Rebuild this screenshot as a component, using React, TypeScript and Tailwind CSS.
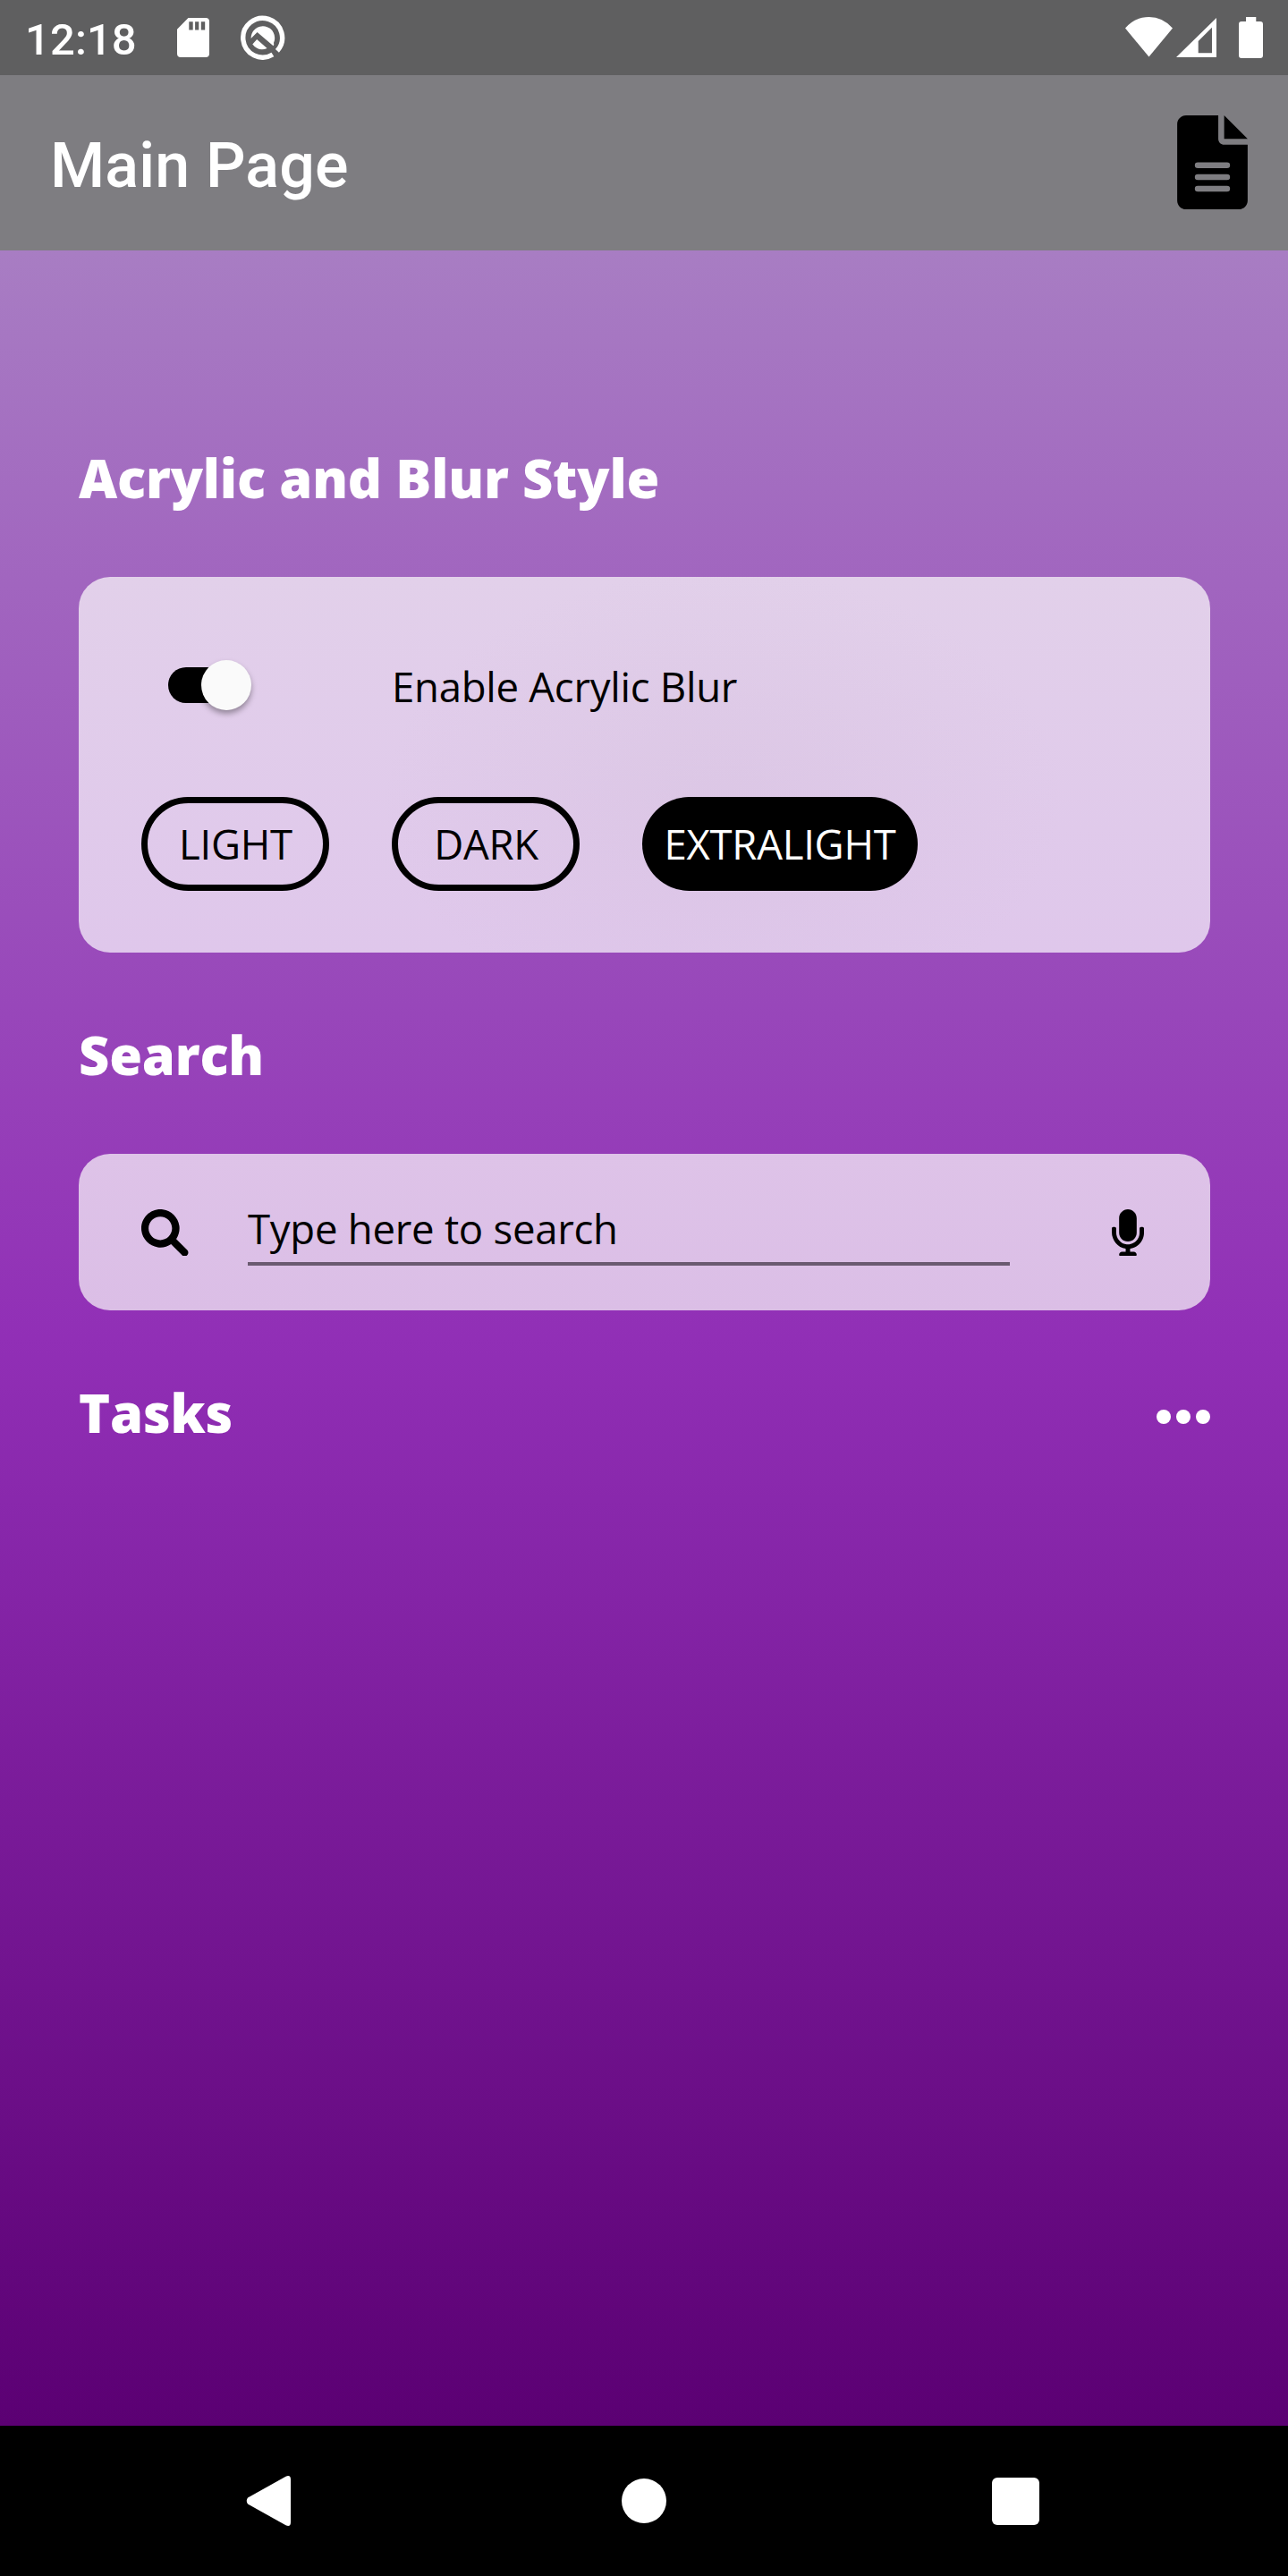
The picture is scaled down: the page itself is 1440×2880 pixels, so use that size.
import React from "react";

const SdCardIcon = () => (
  <svg className="h-[44px] w-[36px]" viewBox="0 0 36 44" fill="#fff" fillRule="evenodd">
    <path d="M12.5 0H32a4 4 0 0 1 4 4v36a4 4 0 0 1-4 4H4a4 4 0 0 1-4-4V12.7ZM13.3 4.3v9.2h4.4V4.3Zm6.8 0v9.2h4.2V4.3Zm6.7 0v9.2h4.4V4.3Z" />
  </svg>
);

const BadgeIcon = () => (
  <svg className="h-[50px] w-[50px]" viewBox="0 0 50 50" fill="none">
    <path d="M35.9 44A21.9 21.9 0 1 1 40.9 39.9" stroke="#fff" strokeWidth="5.4" />
    <path d="M11.6 26A13.3 13.3 0 1 1 37 31Q37.8 33.5 36.5 34.2L18.6 18.9Z" fill="#fff" />
    <path d="M18.2 27 29.6 36.9C24 39.8 17.5 38.3 13.3 32.5Z" fill="#fff" />
  </svg>
);

const StatusBar = () => (
  <div className="flex h-[84px] items-start bg-[#5f5f60] text-white">
    <span className="ml-[28px] mt-[15px] w-[125px] whitespace-nowrap font-['Roboto'] text-[49px] font-medium leading-[60px] tracking-[0.1px]">12:18</span>
    <div className="ml-[45px] mt-5">
      <SdCardIcon />
    </div>
    <div className="ml-[34.500px] mt-[17px]">
      <BadgeIcon />
    </div>
    <svg className="ml-auto mt-[19px] h-[45px] w-[53px]" viewBox="0 0 53 45" fill="#fff">
      <path d="M0 12.5Q11 0 26.5 0T53 12.5L26.5 44.5Z" />
    </svg>
    <svg className="ml-[4px] mt-[20px] h-[44px] w-[45px]" viewBox="0 0 45 44" fill="#fff" fillRule="evenodd">
      <path d="M45 0V44H0ZM40 10.8 24.7 26V39.2H40Z" />
    </svg>
    <svg className="ml-[25px] mr-[28px] mt-[19px] h-[46px] w-[27px]" viewBox="0 0 27 46" fill="#fff">
      <path d="M8 0H19.3V5H24a3 3 0 0 1 3 3V43a3 3 0 0 1-3 3H3a3 3 0 0 1-3-3V8a3 3 0 0 1 3-3H8Z" />
    </svg>
  </div>
);

const AppBar = () => (
  <header className="flex h-[196px] items-center justify-between bg-[#7e7d81] pl-[56px] pr-[45px]">
    <h1 className="pt-[6px] font-['Roboto'] text-[70px] font-medium leading-[80px] tracking-[0.15px] text-white">Main Page</h1>
    <svg className="mb-[2px] h-[105px] w-[79px]" viewBox="0 0 384 512" fillRule="evenodd">
      <path d="M256 0v128h128ZM224 128V0H48C21.5 0 0 21.5 0 48v416c0 26.5 21.5 48 48 48h288c26.500 0 48-21.500 48-48V160H256c-17.700 0-32-14.300-32-32Zm48 288H112a16 16 0 0 1 0-32h160a16 16 0 0 1 0 32Zm0-64H112a16 16 0 0 1 0-32h160a16 16 0 0 1 0 32Zm0-64H112a16 16 0 0 1 0-32h160a16 16 0 0 1 0 32Z" />
    </svg>
  </header>
);

const Heading = ({ children }: { children: React.ReactNode }) => (
  <h2 className="text-[59.500px] font-extrabold leading-[80px] tracking-[-0.17px] text-white">{children}</h2>
);

const Pill = ({ label, active = false }: { label: string; active?: boolean }) => (
  <button
    className={
      active
        ? "flex h-[105px] w-[308px] items-center justify-center rounded-full bg-black text-white"
        : "flex h-[105px] w-[210px] items-center justify-center rounded-full border-[7px] border-black pl-[1px]"
    }
  >
    {label}
  </button>
);

const StyleCard = () => (
  <section className="mt-[71px] h-[420px] rounded-[35px] bg-[radial-gradient(ellipse_380px_260px_at_720px_250px,rgba(200,180,205,0.18),transparent),linear-gradient(#e2d0ea,#dfc7eb)] px-[70px] pt-[82px]">
    <div className="flex h-[80px] items-center">
      <div className="mb-[2px] ml-[30px] flex h-[40px] w-[93px] items-center rounded-full bg-[linear-gradient(90deg,#000_70%,transparent_70%)]">
        <div className="ml-auto h-[56px] w-[56px] shrink-0 rounded-full bg-[#fafafa] shadow-[0_4px_6px_rgba(0,0,0,0.35)]" />
      </div>
      <span className="ml-[157px]">Enable Acrylic Blur</span>
    </div>
    <div className="mt-[84px] flex gap-[70px]">
      <Pill label="LIGHT" />
      <Pill label="DARK" />
      <Pill label="EXTRALIGHT" active />
    </div>
  </section>
);

const SearchCard = () => (
  <section className="mt-[71px] flex h-[175px] items-center rounded-[35px] bg-[linear-gradient(#dec3e8,#dbbee6)] pl-[70px] pr-[74px]">
    <svg className="mt-[1px] h-[52.500px] w-[52.500px]" viewBox="0 0 512 512">
      <path d="M500.3 443.7l-119.7-119.7c27.22-40.41 40.65-90.9 33.46-144.7C401.8 87.79 326.8 13.32 235.2 1.723C99.01-15.51-15.51 99.01 1.724 235.2c11.6 91.64 86.08 166.7 177.6 178.9c53.8 7.189 104.3-6.236 144.7-33.46l119.7 119.7c15.62 15.62 40.95 15.62 56.57 0C515.9 484.7 515.9 459.3 500.3 443.7zM79.1 208c0-70.58 57.42-128 128-128s128 57.42 128 128c0 70.58-57.42 128-128 128S79.1 278.6 79.1 208z" />
    </svg>
    <div className="ml-[66.500px] flex h-[74px] w-[852px] items-start border-b-4 border-[#6a5a70]">
      <span className="leading-[64px]">Type here to search</span>
    </div>
    <svg className="ml-auto mt-[1px] h-[52.500px] w-[36px]" viewBox="0 0 352 512">
      <path d="M176 352c53.02 0 96-42.98 96-96V96c0-53.02-42.98-96-96-96S80 42.98 80 96v160c0 53.02 42.98 96 96 96zm160-160h-16c-8.840 0-16 7.160-16 16v48c0 74.800-64.490 134.820-140.790 127.380C96.710 376.890 48 317.110 48 250.300V208c0-8.840-7.160-16-16-16H16c-8.840 0-16 7.160-16 16v40.160c0 89.640 63.970 169.550 152 181.690V464H112c-17.670 0-32 14.330-32 32 0 8.840 7.160 16 16 16h160c8.840 0 16-7.160 16-16 0-17.670-14.330-32-32-32h-40v-33.770C285.710 418.470 352 344.900 352 256v-48c0-8.840-7.160-16-16-16z" />
    </svg>
  </section>
);

const NavBar = () => (
  <nav className="flex h-[168px] items-center justify-between bg-black pl-[275px] pr-[278.500px]">
    <svg className="h-[56px] w-[50px]" viewBox="0 0 50 56" fill="#fff">
      <path d="M2 24.500 44.500.700Q50-1.500 50 4V52Q50 57.500 44.500 55.300L2 31.500Q-.500 28 2 24.500Z" />
    </svg>
    <div className="ml-[6px] h-[50px] w-[50px] rounded-full bg-white" />
    <div className="h-[53px] w-[53px] rounded-[6px] bg-white" />
  </nav>
);

export default function App() {
  return (
    <div className="flex h-[2880px] w-[1440px] flex-col overflow-hidden bg-black font-['Open_Sans',sans-serif] text-[45.500px] tracking-[-0.26px] text-black">
      <StatusBar />
      <AppBar />
      <main className="flex-1 bg-[linear-gradient(#a87dc3,#912fb6_50%,#5b0073)] pl-[88px] pr-[87px] pt-[214px]">
        <Heading>Acrylic and Blur Style</Heading>
        <StyleCard />
        <div className="mt-[74px]">
          <Heading>Search</Heading>
        </div>
        <SearchCard />
        <div className="mt-[74px] flex items-center justify-between">
          <Heading>Tasks</Heading>
          <div className="mt-[9px] flex gap-[6px] pr-[0.500px]">
            <i className="h-4 w-4 rounded-full bg-white" />
            <i className="h-4 w-4 rounded-full bg-white" />
            <i className="h-4 w-4 rounded-full bg-white" />
          </div>
        </div>
      </main>
      <NavBar />
    </div>
  );
}
